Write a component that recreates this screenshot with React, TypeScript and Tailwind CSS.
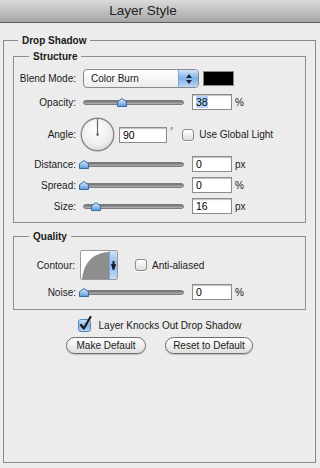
import React from "react";

function Thumb() {
  return (
    <svg width="10" height="9" viewBox="0 0 10 9">
      <defs>
        <linearGradient id="thumbFill" x1="0" y1="0" x2="0" y2="1">
          <stop offset="0" stopColor="#e4f0fc" />
          <stop offset="0.5" stopColor="#9cc4ee" />
          <stop offset="1" stopColor="#5b97d8" />
        </linearGradient>
      </defs>
      <path d="M0.5 3.8 L5 0.5 L9.5 3.8 L9.5 8.5 L0.5 8.5 Z" fill="url(#thumbFill)" stroke="#3a6aa4" strokeWidth="1" strokeLinejoin="round" />
    </svg>
  );
}

function Slider({ pos }: { pos: number }) {
  return (
    <div className="relative w-[101px] h-[9px] flex items-center">
      <div className="w-full h-[5px] rounded-full bg-gradient-to-b from-[#6f6f6f] to-[#b4b4b4] border border-[#7a7a7a]" />
      <div className="absolute top-[0px] flex" style={{ left: pos - 4 }}>
        <Thumb />
      </div>
    </div>
  );
}

function Field({ value, width = "w-[40px]", selected = false }: { value: string; width?: string; selected?: boolean }) {
  return (
    <div className={`${width} h-[16px] bg-white border border-[#8c8c8c] shadow-[inset_0_1px_1px_rgba(0,0,0,0.25)] flex items-center pl-[3px] text-[10.5px] text-black`}>
      <span className={selected ? "bg-[#b5d5ff] leading-[12px]" : "leading-[12px]"}>{value}</span>
    </div>
  );
}

function CheckBox() {
  return (
    <div className="w-[12px] h-[12px] rounded-[3px] border border-[#8a8a8a] bg-gradient-to-b from-[#ffffff] to-[#dedede] shadow-[0_1px_0_rgba(255,255,255,0.8)]" />
  );
}

function SliderRow({ label, pos, value, unit }: { label: string; pos: number; value: string; unit: string }) {
  return (
    <div className="flex items-center h-[16px]">
      <span className="w-[62px] text-right mr-[7px]">{label}</span>
      <Slider pos={pos} />
      <div className="ml-[8px]">
        <Field value={value} />
      </div>
      <span className="ml-[3px]">{unit}</span>
    </div>
  );
}

function Dial() {
  return (
    <svg width="35" height="35" viewBox="0 0 35 35">
      <defs>
        <radialGradient id="dialFill" cx="0.45" cy="0.35" r="0.7">
          <stop offset="0" stopColor="#ffffff" />
          <stop offset="0.7" stopColor="#ececec" />
          <stop offset="1" stopColor="#d2d2d2" />
        </radialGradient>
      </defs>
      <circle cx="17.5" cy="17.5" r="16.3" fill="url(#dialFill)" stroke="#8a8a8a" strokeWidth="1.4" />
      <line x1="17.5" y1="17.5" x2="17.5" y2="1.5" stroke="#6a6a6a" strokeWidth="1.2" />
      <rect x="16.5" y="16.5" width="2.2" height="2.2" fill="#5a5a5a" />
    </svg>
  );
}

function Contour() {
  return (
    <div className="flex w-[38px] h-[30px] border border-[#9a9a9a] bg-white rounded-[2px] overflow-hidden">
      <svg width="28" height="28" viewBox="0 0 28 28">
        <path d="M1 28 C 3 12, 11 2, 28 1 L28 28 Z" fill="#8e8e8e" />
      </svg>
      <div className="flex-1 flex items-center justify-center bg-gradient-to-b from-[#cfe2f7] via-[#8ab8ea] to-[#c6ddf5] border-l border-[#7ea6d4]">
        <svg width="5" height="9" viewBox="0 0 5 9">
          <path d="M0 3 L5 3 L3.2 9 L1.8 9 Z" fill="#141c2a" />
          <rect x="1.5" y="0" width="2" height="3" fill="#141c2a" />
        </svg>
      </div>
    </div>
  );
}

export default function App() {
  return (
    <div className="w-[320px] h-[468px] bg-[#ececec] flex flex-col text-[10px] text-[#1a1a1a] font-['Liberation_Sans',Arial,sans-serif] overflow-hidden">
      <div className="h-[23px] shrink-0 bg-gradient-to-b from-[#dcdcdc] to-[#a6a6a6] border-b border-[#5e5e5e] flex items-center justify-center pr-[34px]">
        <span className="text-[13.5px] text-[#222]">Layer Style</span>
      </div>

      <fieldset className="ml-[3px] w-[313px] mt-[11px] mb-[5px] flex-1 border border-[#8a8a8a]">
        <legend className="ml-[14px] px-[4px] font-bold text-[10px] leading-[13px]">Drop Shadow</legend>

        <fieldset className="mx-[9px] mt-[3px] border border-[#8e8e8e] pb-[8px]">
          <legend className="ml-[15px] px-[4px] font-bold text-[10px] leading-[13px]">Structure</legend>

          <div className="flex flex-col pt-[6px]">
            <div className="flex items-center h-[19px]">
              <span className="w-[62px] text-right mr-[7px]">Blend Mode:</span>
              <div className="w-[116px] h-[19px] rounded-[4px] border border-[#8a8a8a] bg-gradient-to-b from-[#ffffff] to-[#ececec] flex overflow-hidden">
                <span className="flex-1 flex items-center pl-[7px]">Color Burn</span>
                <div className="w-[20px] flex flex-col items-center justify-center gap-[2px] bg-gradient-to-b from-[#d3e5f8] via-[#7fb0e6] to-[#bcd7f4] border-l border-[#7ea6d4]">
                  <svg width="6" height="4" viewBox="0 0 6 4"><path d="M3 0 L6 4 L0 4 Z" fill="#1c2636" /></svg>
                  <svg width="6" height="4" viewBox="0 0 6 4"><path d="M0 0 L6 0 L3 4 Z" fill="#1c2636" /></svg>
                </div>
              </div>
              <div className="ml-[4px] w-[31px] h-[15px] bg-black border border-[#8a8a8a]" />
            </div>

            <div className="flex items-center h-[16px] mt-[6px]">
              <span className="w-[62px] text-right mr-[7px]">Opacity:</span>
              <Slider pos={38} />
              <div className="ml-[8px]">
                <Field value="38" selected />
              </div>
              <span className="ml-[3px]">%</span>
            </div>

            <div className="flex items-center h-[35px] mt-[7px]">
              <span className="w-[62px] text-right mr-[4px]">Angle:</span>
              <Dial />
              <div className="ml-[4px]">
                <Field value="90" width="w-[48px]" />
              </div>
              <span className="ml-[3px] self-start mt-[8px] text-[8px]">°</span>
              <div className="ml-[9px]">
                <CheckBox />
              </div>
              <span className="ml-[5px]">Use Global Light</span>
            </div>

            <div className="mt-[4px]">
              <SliderRow label="Distance:" pos={0} value="0" unit="px" />
            </div>
            <div className="mt-[5px]">
              <SliderRow label="Spread:" pos={0} value="0" unit="%" />
            </div>
            <div className="mt-[5px]">
              <SliderRow label="Size:" pos={12} value="16" unit="px" />
            </div>
          </div>
        </fieldset>

        <fieldset className="mx-[9px] mt-[7px] border border-[#8e8e8e] pb-[9px]">
          <legend className="ml-[15px] px-[4px] font-bold text-[10px] leading-[13px]">Quality</legend>
          <div className="flex flex-col pt-[7px]">
            <div className="flex items-center h-[30px]">
              <span className="w-[61px] text-right mr-[5px]">Contour:</span>
              <Contour />
              <div className="ml-[17px]">
                <CheckBox />
              </div>
              <span className="ml-[5px]">Anti-aliased</span>
            </div>
            <div className="mt-[4px]">
              <SliderRow label="Noise:" pos={0} value="0" unit="%" />
            </div>
          </div>
        </fieldset>

        <div className="flex items-center justify-center mt-[8px] h-[14px]">
          <svg width="16" height="16" viewBox="0 0 16 16" className="-mt-[2px]">
            <defs>
              <linearGradient id="chkFill" x1="0" y1="0" x2="0" y2="1">
                <stop offset="0" stopColor="#d6e8fb" />
                <stop offset="0.5" stopColor="#7fb2ea" />
                <stop offset="1" stopColor="#b9d8f7" />
              </linearGradient>
            </defs>
            <rect x="0.5" y="3.5" width="12" height="12" rx="2.5" fill="url(#chkFill)" stroke="#5a86b8" />
            <path d="M3 9 L5.8 12.5 L12.5 1" fill="none" stroke="#1a1a1a" strokeWidth="2.2" strokeLinecap="round" strokeLinejoin="round" />
          </svg>
          <span className="ml-[5px]">Layer Knocks Out Drop Shadow</span>
        </div>

        <div className="flex items-center justify-center gap-[19px] mt-[5px]">
          <button className="w-[80px] h-[17px] rounded-full border border-[#6f6f6f] bg-gradient-to-b from-[#ffffff] to-[#dedede] shadow-[0_1px_1px_rgba(0,0,0,0.2)] text-[10px] text-[#1a1a1a] flex items-center justify-center">
            Make Default
          </button>
          <button className="w-[88px] h-[17px] rounded-full border border-[#6f6f6f] bg-gradient-to-b from-[#ffffff] to-[#dedede] shadow-[0_1px_1px_rgba(0,0,0,0.2)] text-[10px] text-[#1a1a1a] flex items-center justify-center">
            Reset to Default
          </button>
        </div>
      </fieldset>
    </div>
  );
}
